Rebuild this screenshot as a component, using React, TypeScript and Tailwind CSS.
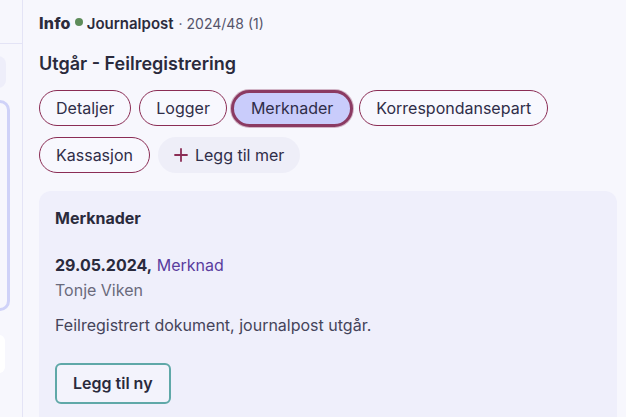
import React from "react";

const Pill = ({ label, active }: { label: string; active?: boolean }) =>
  active ? (
    <button className="h-[37px] rounded-full border-[3px] border-[#8b3a62] bg-[#c9ccfb] px-[17px] text-[16px] text-[#2f2d48] shadow-[0_0_0_1px_rgba(139,58,98,0.35)]">
      {label}
    </button>
  ) : (
    <button className="h-[36px] rounded-full border border-[#8b2d55] bg-[#f8f8fe] px-[16px] text-[16px] text-[#2f2d48]">
      {label}
    </button>
  );

export default function App() {
  return (
    <div
      className="flex h-[417px] w-[626px] overflow-hidden bg-[#f7f7fd]"
      style={{ fontFamily: "Inter, 'Noto Sans', sans-serif" }}
    >
      <aside className="flex w-[23px] shrink-0 flex-col overflow-hidden border-r border-[#e4e4f6]">
        <div className="h-[44px] w-full border-b border-[#e4e4f6]" />
        <div className="ml-[-20px] mt-[12px] h-[32px] w-[26px] rounded-[8px] bg-[#eeeefa]" />
        <div className="ml-[-20px] mt-[12px] h-[211px] w-[30px] rounded-[10px] border-[3px] border-[#cfd2f8] bg-[#f7f7fd]" />
        <div className="ml-[-20px] mt-[24px] h-[38px] w-[25px] rounded-[6px] bg-white" />
      </aside>
      <main className="flex min-w-0 flex-1 flex-col pl-[16px] pr-[9px]">
        <div className="mt-[11px] flex items-baseline text-[#2c2b3c]">
          <span className="text-[16px] font-extrabold tracking-[0.2px]">Info</span>
          <span className="mx-[4px] inline-block h-[8px] w-[8px] translate-y-[-1px] self-center rounded-full bg-[#5e8c5a]" />
          <span className="text-[15px] font-semibold">Journalpost</span>
          <span className="ml-[5px] text-[14px] text-[#55546a]">· 2024/48 (1)</span>
        </div>
        <h1 className="mt-[16px] text-[18px] font-semibold leading-[24px] text-[#2a2a3c]">
          Utgår - Feilregistrering
        </h1>
        <div className="mt-[14px] flex w-[560px] flex-wrap items-center gap-x-[8px] gap-y-[10px]">
          <Pill label="Detaljer" />
          <Pill label="Logger" />
          <div className="-ml-[4px] -mr-[2px]">
            <Pill label="Merknader" active />
          </div>
          <Pill label="Korrespondansepart" />
          <Pill label="Kassasjon" />
          <button className="flex h-[36px] items-center gap-[7px] rounded-full bg-[#eeeef8] px-[16px] text-[16px] text-[#2f2d48]">
            <svg width="14" height="14" viewBox="0 0 14 14">
              <path d="M7 1v12M1 7h12" stroke="#8b2d55" strokeWidth="1.8" strokeLinecap="round" />
            </svg>
            Legg til mer
          </button>
        </div>
        <section className="mt-[18px] flex-1 rounded-t-[12px] bg-[#efeffb] px-[16px] pt-[17px]">
          <h2 className="text-[16px] font-bold leading-[20px] text-[#2a2a3c]">Merknader</h2>
          <div className="mt-[27px] text-[16px] leading-[20px]">
            <span className="font-bold text-[#2a2a3c]">29.05.2024,</span>{" "}
            <span className="text-[#5a3d9e]">Merknad</span>
          </div>
          <div className="mt-[5px] text-[16px] leading-[20px] text-[#6a6a7c]">Tonje Viken</div>
          <p className="mt-[15px] text-[16px] leading-[20px] text-[#45445a]">
            Feilregistrert dokument, journalpost utgår.
          </p>
          <button className="mt-[28px] h-[41px] rounded-[6px] border-2 border-[#5fa8a8] bg-[#f3f3fc] px-[16px] text-[16px] font-semibold text-[#2a2a3c]">
            Legg til ny
          </button>
        </section>
      </main>
    </div>
  );
}
